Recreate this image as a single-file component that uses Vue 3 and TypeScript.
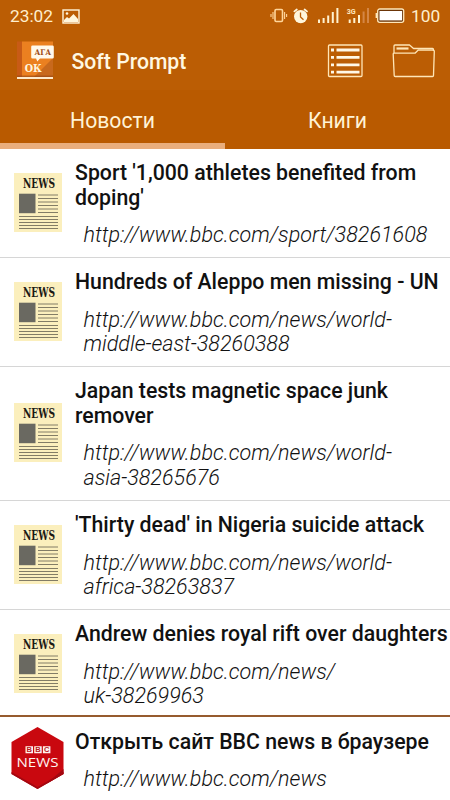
<script setup lang="ts">
interface NewsItem {
  title: string[]
  url: string[]
  height: number
}

const news: NewsItem[] = [
  { title: ["Sport '1,000 athletes benefited from", "doping'"], url: ['http://www.bbc.com/sport/38261608'], height: 109 },
  { title: ['Hundreds of Aleppo men missing - UN'], url: ['http://www.bbc.com/news/world-', 'middle-east-38260388'], height: 109 },
  { title: ['Japan tests magnetic space junk', 'remover'], url: ['http://www.bbc.com/news/world-', 'asia-38265676'], height: 134 },
  { title: ["'Thirty dead' in Nigeria suicide attack"], url: ['http://www.bbc.com/news/world-', 'africa-38263837'], height: 109 },
  { title: ['Andrew denies royal rift over daughters'], url: ['http://www.bbc.com/news/', 'uk-38269963'], height: 106 },
]
</script>

<template>
  <div class="screen">
    <header>
      <div class="status">
        <span class="clock">23:02</span>
        <svg class="picture" width="18" height="15" viewBox="0 0 18 15">
          <rect x="1" y="1" width="16" height="13" fill="none" stroke="#fff6dc" stroke-width="1.4" />
          <path d="M2 13v-2l3-3 2 1.5 4.5-4.5 4.5 5v3z" fill="#fff6dc" />
          <circle cx="5" cy="4.5" r="1.3" fill="#fff6dc" />
        </svg>
        <svg class="indicators" width="136" height="18" viewBox="0 0 136 18">
          <g fill="none" stroke="#ffd69c">
            <rect x="5" y="2.5" width="7.5" height="12" rx="1.2" stroke-width="1.6" />
            <path d="M3 5v7M14.6 5v7M1 7v3M16.6 7v3" stroke-width="1.1" />
          </g>
          <circle cx="30.7" cy="9.6" r="6.7" fill="#fff6dc" />
          <path d="M24.4 4.4 26.8 2.5M37 4.4 34.6 2.5" stroke="#fff6dc" stroke-width="1.8" stroke-linecap="round" />
          <path d="M30.5 5.5v4.5l3 2.7" fill="none" stroke="#bc5f06" stroke-width="1.3" />
          <path d="M49 16v-3.5M53.6 16V11M58.2 16V8.5M62.8 16V5M67.4 16V1" stroke="#fff2d0" stroke-width="2" />
          <path d="M79.7 16v-3.5M84.3 16V11M89 16V8" stroke="#fff2d0" stroke-width="2" />
          <path d="M93.6 16V4.5M98 16V1" stroke="#d48645" stroke-width="2" />
          <text x="76.7" y="6.8" class="network" textLength="9" lengthAdjust="spacingAndGlyphs">3G</text>
          <rect x="107.7" y="2" width="26" height="13.3" rx="2" fill="#6b3508" stroke="#ffe7ba" stroke-width="1.3" />
          <rect x="109.5" y="4" width="22.6" height="9.4" fill="#fff" />
          <path d="M106.4 6v5" stroke="#ffe7ba" stroke-width="1.6" />
        </svg>
        <span class="charge">100</span>
      </div>
      <div class="toolbar">
        <svg class="logo" width="40" height="42" viewBox="0 0 40 42">
          <path d="M3 1.500h5v36H3z" fill="#c85b16" />
          <path d="M8 1.500h31v35.500H8z" fill="#eb8020" />
          <path d="M39 18v19H20z" fill="#c8691d" />
          <path d="M3 36.200h36" stroke="#9a4b16" />
          <path d="M3 37h36v2H3z" fill="#ffeacb" />
          <path d="M18.500 5.500h20q1.300 0 1.300 1.300v10.400q0 1.300-1.300 1.300H26L23.300 21.500l-1.200-3h-3.600q-1.300 0-1.300-1.300V6.800q0-1.300 1.300-1.300z" fill="#fff9ec" />
          <text x="20.500" y="14.800" class="aga" textLength="16.500" lengthAdjust="spacingAndGlyphs">АГА</text>
          <text x="10.800" y="32" class="ok" textLength="17" lengthAdjust="spacingAndGlyphs">ОК</text>
        </svg>
        <h1>Soft Prompt</h1>
        <svg class="list-icon" width="36" height="34" viewBox="0 0 36 34">
          <rect x="1.5" y="1" width="33.500" height="31.5" rx="1" fill="none" stroke="#ffe6b7" stroke-width="1.3" />
          <path d="M9.5 6h23M9.5 13.4h23M9.5 20.8h23M9.5 28.2h23" stroke="#fff8e7" stroke-width="2.8" />
          <path d="M4 6h3M4 13.4h3M4 20.8h3M4 28.2h3" stroke="#fff8e7" stroke-width="2.8" />
        </svg>
        <svg class="folder-icon" width="43" height="34" viewBox="0 0 43 34">
          <path d="M2 9V2q0-1 1-1h14.500l4 3.5H40.5q1 0 1 1V7M1.200 10q0-.8.8-.8H23l3-3h15.3q1 0 1 1L41.5 31.5q0 1-1 1H3.200q-1 0-1-1z" fill="none" stroke="#ffe6b7" stroke-width="1.3" stroke-linejoin="round" />
          <path d="M4.5 4.5h12" stroke="#ffe6b7" stroke-width="2.2" />
        </svg>
      </div>
      <nav>
        <button class="active">Новости</button>
        <button>Книги</button>
      </nav>
    </header>

    <main>
      <article v-for="item in news" :key="item.title[0]" :style="{ height: item.height + 'px' }">
        <div class="thumb">
          <svg width="48" height="59" viewBox="0 0 48 59">
            <path d="M0 0h48v59H0z" fill="#fbefbd" />
            <text x="9" y="15.3" class="news" textLength="32" lengthAdjust="spacingAndGlyphs">NEWS</text>
            <path d="M5 20.7h16.5v19.5H5z" fill="#6a6961" />
            <path d="M24 22h20M24 25.5h20M24 29h20M24 32.5h20M24 36h20M24 39.5h20M5 43.5h39M5 46.5h39M5 49.5h39M5 52.5h39M5 55.5h39" stroke="#827c66" stroke-width="1" />
          </svg>
        </div>
        <div class="body">
          <h2><span v-for="line in item.title" :key="line">{{ line }}</span></h2>
          <p><span v-for="line in item.url" :key="line">{{ line }}</span></p>
        </div>
      </article>
    </main>

    <footer>
      <div class="thumb">
        <svg width="54" height="64" viewBox="0 0 54 64">
          <path d="M27.5 1 53.5 16v32l-26 15-26-15V16z" fill="#c9080f" />
          <path d="m1.5 46 26 15 26-15v2l-26 15-26-15z" fill="#a30710" />
          <path d="m36 58 17.5-15v5z" fill="#a30710" />
          <path d="M15.5 20.2h7.500v7h-7.500zM24.2 20.2h7.500v7h-7.500zM32.900 20.200h7.500v7h-7.500z" fill="#fff1ed" />
          <text x="19.2" y="26.4" class="bbc">B</text>
          <text x="27.9" y="26.4" class="bbc">B</text>
          <text x="36.6" y="26.4" class="bbc">C</text>
          <text x="6.5" y="40.5" class="bbc-news" textLength="42" lengthAdjust="spacingAndGlyphs">NEWS</text>
        </svg>
      </div>
      <div class="body">
        <h2><span>Открыть сайт BBC news в браузере</span></h2>
        <p><span>http://www.bbc.com/news</span></p>
      </div>
    </footer>
  </div>
</template>

<style>
body { margin: 0; }
</style>

<style scoped>
* { box-sizing: border-box; }
.screen { width: 450px; height: 800px; overflow: hidden; background: #fff; font-family: Roboto, sans-serif; }
svg { flex: none; overflow: visible; }
header { height: 149px; background: #bb5d04; }
.status { display: flex; height: 31px; align-items: center; padding: 1px 9px 0 10px; color: #ffeecd; }
.clock { width: 52px; font-size: 17.3px; }
.indicators { margin-left: auto; }
.charge { width: 30px; margin-left: 5px; font-size: 17.3px; }
.network { font: 700 6.5px Roboto, sans-serif; fill: #ffe8bf; }
.toolbar { display: flex; height: 59px; align-items: center; padding: 0 15px 0 14px; }
h1 { flex: 1; margin: 2px 0 0 17.5px; color: #fff8e2; font-size: 21.2px; font-weight: 500; white-space: nowrap; }
.folder-icon { margin-left: 29px; }
.aga { font: 700 7.8px 'DejaVu Serif', serif; fill: #a04c15; }
.ok { font: 700 10.5px 'DejaVu Serif', serif; fill: #fff5df; }
nav { display: flex; height: 59px; background: #b95a00; }
button { flex: 1; height: 59px; padding: 7px 0 0; border: 0; border-bottom: 6px solid transparent; background: none; color: #fff3d6; font: 21.2px Roboto, sans-serif; }
.active { border-bottom-color: #e9ae7d; }
article, footer { display: flex; border-bottom: 1px solid #d6d6d6; }
article:last-child { border-bottom: 0; }
.thumb { display: flex; width: 75px; flex: none; align-items: center; padding: 0 0 2px 14px; }
article:last-child .thumb { padding-bottom: 0; }
.body { padding-top: 12px; color: #111; }
h2, p { margin: 0; line-height: 24.5px; white-space: nowrap; }
h2 { font-size: 21.27px; font-weight: 500; }
p { margin-top: 13px; padding-left: 8.5px; font-size: 21.55px; font-weight: 300; font-style: italic; }
h2 span, p span { display: block; }
.news { font: 700 13.2px 'DejaVu Serif', serif; font-stretch: condensed; fill: #1b1a14; }
footer { height: 85px; margin-top: -1px; border-top: 2px solid #965b2e; border-bottom: 0; }
footer .body { padding-top: 12.5px; }
footer .thumb { height: 85px; padding: 0 0 3px 10px; }
.bbc { font: 700 7.5px 'Liberation Sans', sans-serif; fill: #b61b1d; text-anchor: middle; }
.bbc-news { font: 13.3px 'Open Sans', sans-serif; fill: #fff4f1; }
</style>
